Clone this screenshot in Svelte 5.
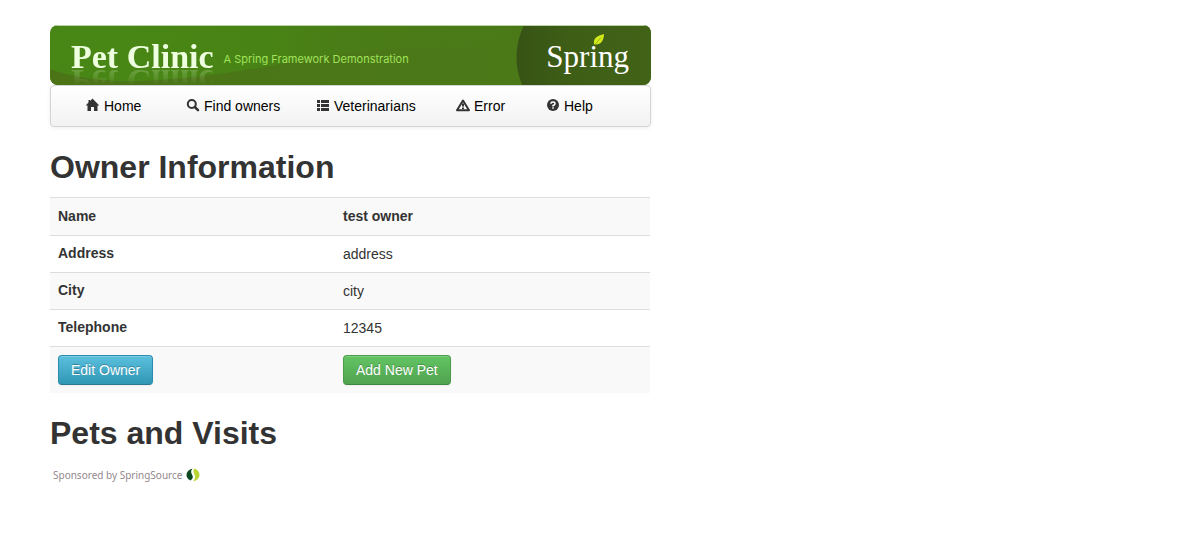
<script>
  const nav = [
    { label: 'Home', icon: 'home' },
    { label: 'Find owners', icon: 'search' },
    { label: 'Veterinarians', icon: 'list' },
    { label: 'Error', icon: 'warning' },
    { label: 'Help', icon: 'help' }
  ];
  const owner = [
    { label: 'Name', value: 'test owner', strong: true },
    { label: 'Address', value: 'address' },
    { label: 'City', value: 'city' },
    { label: 'Telephone', value: '12345' }
  ];
</script>

<div class="container">
  <header class="banner">
    <svg class="backdrop" viewBox="0 0 601 60" preserveAspectRatio="none" aria-hidden="true">
      <defs>
        <linearGradient id="base" x1="0" x2="1">
          <stop offset="0" stop-color="#488715" />
          <stop offset="0.35" stop-color="#488415" />
          <stop offset="0.5" stop-color="#4a7c17" />
          <stop offset="1" stop-color="#4b7618" />
        </linearGradient>
        <linearGradient id="hill" x1="0" x2="1">
          <stop offset="0" stop-color="#4b7417" />
          <stop offset="1" stop-color="#4b7918" />
        </linearGradient>
        <linearGradient id="disc" x1="0" x2="1">
          <stop offset="0" stop-color="#375315" />
          <stop offset="0.4" stop-color="#3e5e16" />
          <stop offset="1" stop-color="#416317" />
        </linearGradient>
      </defs>
      <rect width="601" height="60" fill="url(#base)" />
      <path d="M0 44Q35 57 90 56Q160 53 240 37Q340 18 480 16V60H0Z" fill="url(#hill)" />
      <path d="M474 0Q460 30 472 60H601V0Z" fill="url(#disc)" />
      <rect width="601" height="1" fill="#b9d3a4" />
    </svg>
    <span class="title">Pet Clinic</span>
    <span class="tagline">A Spring Framework Demonstration</span>
    <span class="brand">
      Spring
      <svg class="leaf" viewBox="0 0 12 12" aria-hidden="true">
        <path d="M1 10C0 4 4 2 11 0C11 6 8 11 2 10.500Z" fill="#d2ea1c" />
        <path d="M1.500 11L8 3.500" stroke="#8fa818" stroke-width="0.800" fill="none" />
      </svg>
    </span>
  </header>

  <nav class="navbar">
    <ul>
      {#each nav as item}
        <li>
          <a href="#{item.icon}">
            <svg viewBox="0 0 14 14" aria-hidden="true">
              {#if item.icon === 'home'}
                <path d="M6.500 -0.500L13.300 6.500H11.500V12H8V8H5V12H1.500V6.500H-0.300L2.500 3.600V1H4.200V1.900Z" />
              {:else if item.icon === 'search'}
                <circle cx="5.800" cy="5" r="4" fill="none" stroke="#333" stroke-width="2" />
                <path d="M8.800 8L12 11.200" stroke="#333" stroke-width="2.500" stroke-linecap="round" />
              {:else if item.icon === 'list'}
                <path d="M1 1h3v3H1zM5 1h8v3H5zM1 5h3v3H1zM5 5h8v3H5zM1 9h3v3H1zM5 9h8v3H5z" />
              {:else if item.icon === 'warning'}
                <path d="M7 1.500L13 11.200H1Z" fill="none" stroke="#333" stroke-width="2" stroke-linejoin="round" />
                <path d="M6 4.500h2v3H6zM6 8.500h2v1.500H6z" />
              {:else}
                <circle cx="7" cy="6" r="6" />
                <path d="M5 4.700Q5 3 7 3T9 4.700Q9 5.700 7 6.500V7.500M7 8.300V9.700" fill="none" stroke="#fff" stroke-width="1.500" />
              {/if}
            </svg>
            {item.label}
          </a>
        </li>
      {/each}
    </ul>
  </nav>

  <main>
    <h2>Owner Information</h2>
    <table>
      <tbody>
        {#each owner as row}
          <tr>
            <th scope="row">{row.label}</th>
            <td class:strong={row.strong}>{row.value}</td>
          </tr>
        {/each}
        <tr class="actions">
          <td><a class="btn info" href="#edit">Edit Owner</a></td>
          <td><a class="btn success" href="#add">Add New Pet</a></td>
        </tr>
      </tbody>
    </table>
    <h2>Pets and Visits</h2>
  </main>

  <footer>
    <span>Sponsored by SpringSource</span>
    <svg viewBox="0 0 14 14" aria-hidden="true">
      <path d="M6.500 0.500C3 1.500 0.500 4 0.500 7C0.500 9.500 2 11.500 4.500 12.500C7 10.500 7.500 9 6 6.500C4.500 4 5 2.500 6.500 0.500Z" fill="#0b4a1e" />
      <path d="M8.500 0.500C11.500 1.500 13.500 4 13.500 7C13.500 10 11 12.500 7 13.500C9.500 10.500 9.500 9 8.500 6.500C7 4 7 2.500 8.500 0.500Z" fill="#b9d531" />
    </svg>
  </footer>
</div>

<style>
  :global(body) {
    margin: 0;
    background: #fff;
    color: #333;
    font: 14px/20px "Liberation Sans", Arial, sans-serif;
  }
  .container {
    max-width: 601px;
    padding: 25px 50px;
  }
  .banner {
    position: relative;
    display: flex;
    align-items: center;
    height: 60px;
    padding: 4px 22px 0 21px;
    border-radius: 8px;
    overflow: hidden;
    box-sizing: border-box;
  }
  .backdrop {
    position: absolute;
    inset: 0;
    width: 100%;
    height: 100%;
  }
  .title,
  .tagline,
  .brand {
    position: relative;
    white-space: nowrap;
  }
  .title {
    color: #eeffdf;
    font: bold 34px/40px "Liberation Serif", serif;
    -webkit-box-reflect: below -16px linear-gradient(transparent 40%, rgba(255, 255, 255, 0.35));
  }
  .tagline {
    margin: 4px 0 0 10px;
    color: #a0e25a;
    font-family: Inter, sans-serif;
    font-size: 11px;
  }
  .brand {
    margin-left: auto;
    color: #fff;
    font: 31px/40px "Liberation Serif", serif;
  }
  .leaf {
    position: absolute;
    left: 47px;
    top: -3px;
    width: 12px;
    height: 12px;
  }
  .navbar {
    padding: 0 35px;
    border: 1px solid #d4d4d4;
    border-radius: 4px;
    background: linear-gradient(#fff, #f2f2f2);
    box-shadow: 0 1px 4px rgba(0, 0, 0, 0.065);
  }
  ul {
    display: grid;
    grid-template-columns: 100px 130px 140px 90px 70px;
    margin: 0;
    padding: 0;
    list-style: none;
  }
  .navbar a {
    display: flex;
    align-items: center;
    gap: 4px;
    padding: 10px 0;
    color: #000;
    text-decoration: none;
    white-space: nowrap;
  }
  .navbar svg {
    width: 14px;
    height: 14px;
    fill: #333;
    overflow: visible;
  }
  h2 {
    margin: 20px 0 10px;
    font-size: 32px;
    line-height: 40px;
  }
  table {
    width: calc(100% - 1px);
    border-collapse: separate;
    border-spacing: 0;
    table-layout: fixed;
  }
  th,
  td {
    padding: 8px;
    border-top: 1px solid #ddd;
    text-align: left;
    vertical-align: top;
  }
  th {
    width: 269px;
    padding: 7px 8px 9px;
  }
  tr:first-child > * {
    padding: 8px 8px 9px;
  }
  tr:nth-child(odd) {
    background: #f9f9f9;
  }
  .strong {
    font-weight: bold;
  }
  .btn {
    display: block;
    width: max-content;
    padding: 4px 12px;
    border: 1px solid;
    border-radius: 4px;
    color: #fff;
    text-decoration: none;
    text-shadow: 0 -1px 0 rgba(0, 0, 0, 0.25);
    box-shadow: inset 0 1px 0 rgba(255, 255, 255, 0.2), 0 1px 2px rgba(0, 0, 0, 0.05);
  }
  .info {
    border-color: #2c8eae #2c8eae #28788f;
    background: linear-gradient(#5bc0de, #2f96b4);
  }
  .success {
    border-color: #4a9c4a #4a9c4a #3f863f;
    background: linear-gradient(#62c462, #51a351);
  }
  footer {
    display: flex;
    align-items: center;
    gap: 4px;
    padding: 2px 3px;
    color: #94888e;
    font: 10px/20px "Noto Sans", sans-serif;
  }
  footer svg {
    width: 14px;
    height: 14px;
  }
</style>
